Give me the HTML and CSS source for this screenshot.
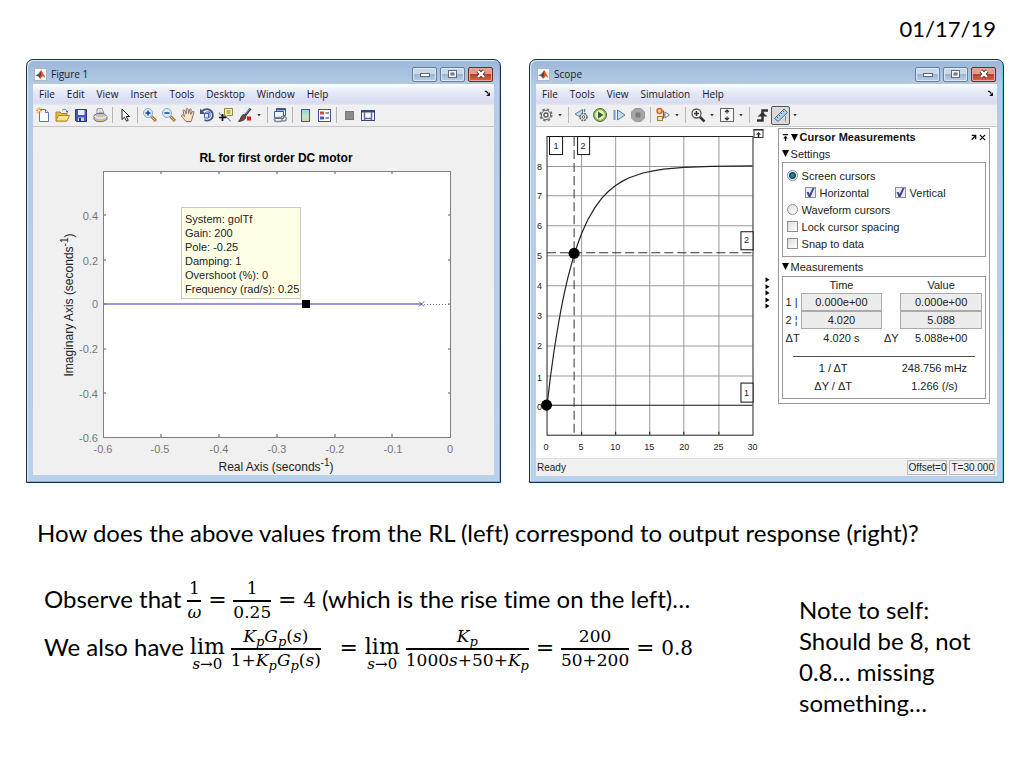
FILE: index.html
```html
<!DOCTYPE html>
<html lang="en">
<head>
<meta charset="utf-8">
<title>DC motor root locus and response</title>
<link rel="stylesheet" href="styles.css">
</head>
<body>
<svg class="defs" aria-hidden="true">
  <defs>
    <linearGradient id="sky" x1="0" y1="0" x2="0" y2="1"><stop offset="0" stop-color="#9ccdf0"/><stop offset=".5" stop-color="#b5e8c8"/><stop offset="1" stop-color="#f3c99a"/></linearGradient>
    <symbol id="matlab" viewBox="0 0 14 14"><rect x=".5" y=".5" width="13" height="13" fill="#f7f7f7" stroke="#a9b5c4"/><path d="M1.5 8 5 6l2.500-3.500L6 10 4 9z" fill="#3d6fb0"/><path d="M5 8 8 2.300 12.500 10.500 9.500 9 6.500 11.500z" fill="#d95a24"/><path d="M8 2.300 6.500 11.500 5 8z" fill="#7c2a1c"/></symbol>
    <symbol id="dock" viewBox="0 0 8 8"><path d="M1 1.500h1.500L5 4" fill="none" stroke="#111" stroke-width="1.500"/><path d="M6.800 2.500v4.300H2.500z" fill="#111"/></symbol>
  </defs>
</svg>
<main class="slide">
  <p class="date">01/17/19</p>
  <div class="windows">
    <section class="window" aria-label="Figure 1">
      <header class="titlebar">
        <svg class="logo"><use href="#matlab"/></svg>
        <h2 class="title">Figure 1</h2>
        <button class="caption" aria-label="Minimize"><svg viewBox="0 0 12 10"><rect x="1.500" y="4.500" width="9" height="3" fill="#fff" stroke="#59687a"/></svg></button>
        <button class="caption" aria-label="Maximize"><svg viewBox="0 0 12 10"><rect x="1.500" y="1.500" width="8" height="7" fill="#fff" stroke="#59687a"/><rect x="4" y="4" width="3" height="2" fill="#7fa0c4" stroke="#59687a"/></svg></button>
        <button class="caption close" aria-label="Close"><svg viewBox="0 0 12 10"><path d="M3 2l6 6M9 2 3 8" stroke="#6a2a22" stroke-width="4"/><path d="M3 2l6 6M9 2 3 8" stroke="#fff" stroke-width="2.400"/></svg></button>
      </header>
      <nav class="menubar">
        <button>File</button><button>Edit</button><button>View</button><button>Insert</button><button>Tools</button><button>Desktop</button><button>Window</button><button>Help</button>
        <svg class="dock"><use href="#dock"/></svg>
      </nav>
      <div class="toolbar">
        <button class="tool" aria-label="New"><svg viewBox="0 0 16 16"><path d="M4.500 2.500h6l3 3v9h-9z" fill="#fbfcff" stroke="#5b76b8"/><path d="M10.500 2.500v3h3" fill="#dce6f7" stroke="#5b76b8"/><path d="M1 3.500h6M4 .5v6M2 1.500l4 4M6 1.500l-4 4" stroke="#e8793a"/><circle cx="4" cy="3.500" r="1.200" fill="#fff2c0"/></svg></button>
        <button class="tool" aria-label="Open"><svg viewBox="0 0 16 16"><path d="M2 14V5h4l1.500 1.500H13V14z" fill="#e8b84a" stroke="#a9812a"/><path d="M2 14 4.500 8.500H15.500L13 14z" fill="#ffe58b" stroke="#b38a2c"/><path d="M8 3.500c2-2 4-1.500 5 1" fill="none" stroke="#3f6fb5"/><path d="M14.500 3.500 13.500 6 11.500 4.500z" fill="#3f6fb5"/></svg></button>
        <button class="tool" aria-label="Save"><svg viewBox="0 0 16 16"><path d="M2.500 2.500h11v12h-10l-1-1z" fill="#4759bb" stroke="#29367c"/><path d="M5 3h6.500v5H5z" fill="#e8eefc"/><path d="M5 10.500h6V14H5z" fill="#c7d0e8"/><path d="M6 11h2v3H6z" fill="#2c3a82"/></svg></button>
        <button class="tool" aria-label="Print"><svg viewBox="0 0 16 16"><path d="M5 7V2l5-.5L12 7z" fill="#fff" stroke="#888"/><path d="M6.500 4h3M6.500 5.500h4" stroke="#aaa"/><path d="M2 8.500 5 6.500h7l3 3v3l-4 2H5l-3-2z" fill="#c2c2c4" stroke="#747476"/><path d="M2.500 9.500 6 11h5l3.500-1.500" fill="none" stroke="#fff"/><path d="M6 13h5" stroke="#e6c93c" stroke-width="1.500"/></svg></button>
        <span class="sep"></span>
        <button class="tool" aria-label="Edit plot"><svg viewBox="0 0 16 16"><path d="M5 2v10.500l2.500-2.300 2 4 1.700-.9-2-3.800H12.500z" fill="#fff" stroke="#222"/></svg></button>
        <span class="sep"></span>
        <button class="tool" aria-label="Zoom in"><svg viewBox="0 0 16 16"><path d="M9.500 9.500 14 14" stroke="#a47438" stroke-width="3"/><path d="m9.500 9.500 4 4" stroke="#edc07a"/><circle cx="6" cy="6" r="4.500" fill="#d5edf9" stroke="#83abc9"/><path d="M3.500 6h5M6 3.500v5" stroke="#173f91" stroke-width="1.500"/></svg></button>
        <button class="tool" aria-label="Zoom out"><svg viewBox="0 0 16 16"><path d="M9.500 9.500 14 14" stroke="#a47438" stroke-width="3"/><path d="m9.500 9.500 4 4" stroke="#edc07a"/><circle cx="6" cy="6" r="4.500" fill="#d5edf9" stroke="#83abc9"/><path d="M3.500 6h5" stroke="#173f91" stroke-width="1.500"/></svg></button>
        <button class="tool" aria-label="Pan"><svg viewBox="0 0 16 16"><path d="M6 14.500C4 12 2.500 10.500 1.500 9c0-1.500 1.500-1.300 3 .5L3 4c0-1.500 1.500-1.500 2 0l1.300 3L6.200 2.500c.2-1.500 1.700-1.400 1.900 0l.4 4.200 1-4c.4-1.300 1.900-1 1.700.3l-.6 4.500 1.800-2.800c.8-1 2-.3 1.500.8-1 3-1.500 5.500-2.900 9z" fill="#fde3c8" stroke="#806a68"/></svg></button>
        <button class="tool" aria-label="Rotate 3D"><svg viewBox="0 0 16 16"><path d="M2 5.500C5 1 11 1 13.300 5.500 15.500 11 10.500 15 5.500 13" fill="none" stroke="#43557c" stroke-width="1.800"/><path d="M1 1.500v5.500h5.500z" fill="#43557c"/><path d="m5.500 6.500 2-1.500H11v4.500L9.500 11h-4zM5.500 6.500h4V11M9.500 6.500 11 5" fill="#dfe8fb" stroke="#4360ab"/></svg></button>
        <button class="tool" aria-label="Data cursor"><svg viewBox="0 0 16 16"><path d="M6.500 1.500h8v7h-5l-2 2.500v-2.500h-1z" fill="#f5f1a0" stroke="#8a8a3c"/><path d="M8.500 4h4M8.500 6h4" stroke="#82823d"/><path d="M1.500 5.500c0 5 7.500 2 11 9" fill="none" stroke="#4b54c0"/><path d="M4.500 7v7M1 10.500h7" stroke="#111" stroke-width="1.700"/></svg></button>
        <button class="tool" aria-label="Brush"><svg viewBox="0 0 16 16"><path d="M13.500 1.500 8 8.500" stroke="#33415e" stroke-width="2.400"/><path d="M13 1.500 8.500 7" stroke="#9fb2d4" stroke-width=".8"/><path d="M6.500 7.500 9 9.500C8.500 13 5 14 1.500 14.500 4 12.500 3.500 8.500 6.500 7.500z" fill="#704943" stroke="#3b3038"/><rect x="10" y="9.500" width="4" height="4" fill="#d91c1c"/></svg></button>
        <span class="caret"></span>
        <span class="sep"></span>
        <button class="tool" aria-label="Link plot"><svg viewBox="0 0 16 16"><path d="M4.500 1.500h9v7h-9z" fill="#fff" stroke="#3c588c"/><path d="M4.500 2.500h9" stroke="#3c588c" stroke-width="2"/><path d="M2.500 4.500h9v7h-9z" fill="#eef4fe" stroke="#3c588c"/><path d="M4 10.500h4a2 2 0 0 1 0 4H5a2 2 0 0 1-1-4zM9 9.500h3.500a2.300 2.300 0 0 1 0 4.500H9" fill="none" stroke="#7d8b9d" stroke-width="1.500"/></svg></button>
        <span class="sep"></span>
        <button class="tool" aria-label="Insert colorbar"><svg viewBox="0 0 16 16"><rect x="4.500" y="2.500" width="8" height="12" fill="url(#sky)" stroke="#44588a"/></svg></button>
        <button class="tool" aria-label="Insert legend"><svg viewBox="0 0 16 16"><rect x="2.500" y="2.500" width="12" height="12" fill="#fff" stroke="#45528c"/><path d="M4 4.500h4v3H4z" fill="#d94343"/><path d="M4 9.500h4v3H4z" fill="#4659cf"/><path d="M9.500 6H13M9.500 11H13" stroke="#222"/></svg></button>
        <span class="sep"></span>
        <button class="tool" aria-label="Hide plot tools"><svg viewBox="0 0 16 16"><rect x="4.500" y="4.500" width="8" height="8" fill="#8b8b8b" stroke="#777"/></svg></button>
        <button class="tool" aria-label="Show plot tools"><svg viewBox="0 0 16 16"><rect x="1.500" y="3.500" width="13" height="10" fill="#fff" stroke="#35477e"/><path d="M1.500 4.500h13" stroke="#35477e" stroke-width="2"/><path d="M4.500 5v8M11.500 5v8M4.500 11.500h7" stroke="#5c6c9c" stroke-width="1.500"/></svg></button>
      </div>
      <svg class="figure" viewBox="33 127 461 348" role="img" aria-label="Root locus plot">
        <rect x="103" y="171" width="348" height="266" fill="#fff"/>
        <path d="M161 171v3M219 171v3M277 171v3M335 171v3M392 171v3M161 437v-3M219 437v-3M277 437v-3M335 437v-3M392 437v-3M103 215h3M103 260h3M103 304h3M103 349h3M103 393h3M451 215h-3M451 260h-3M451 304h-3M451 349h-3M451 393h-3" stroke="#555"/>
        <rect x="103.500" y="171.500" width="347" height="266" fill="none" stroke="#808080"/>
        <path d="M421 304.500h30" stroke="#777" stroke-dasharray="1 2"/>
        <path d="M104 304h318" stroke="#7a72c8" stroke-width="1.500"/>
        <path d="m419 301.500 5 5m0-5-5 5" stroke="#3f6fd0"/>
        <text class="plot-title" x="276" y="162">RL for first order DC motor</text>
        <g class="ticks end"><text x="98" y="220">0.4</text><text x="98" y="265">0.2</text><text x="98" y="308">0</text><text x="98" y="353">-0.2</text><text x="98" y="398">-0.4</text><text x="98" y="442">-0.6</text></g>
        <g class="ticks"><text x="103" y="453">-0.6</text><text x="160" y="453">-0.5</text><text x="219" y="453">-0.4</text><text x="277" y="453">-0.3</text><text x="335" y="453">-0.2</text><text x="393" y="453">-0.1</text><text x="450" y="453">0</text></g>
        <text class="axis" x="276" y="471">Real Axis (seconds<tspan class="sup" dy="-5">-1</tspan><tspan dy="5">)</tspan></text>
        <text class="axis" transform="translate(73 305) rotate(-90)">Imaginary Axis (seconds<tspan class="sup" dy="-5">-1</tspan><tspan dy="5">)</tspan></text>
        <rect x="181.500" y="207.500" width="119" height="91" fill="#ffffe6" stroke="#c9c9bd"/>
        <g class="tip"><text x="185" y="223">System: golTf</text><text x="185" y="237">Gain: 200</text><text x="185" y="251">Pole: -0.25</text><text x="185" y="265">Damping: 1</text><text x="185" y="279">Overshoot (%): 0</text><text x="185" y="293">Frequency (rad/s): 0.25</text></g>
        <rect x="302" y="300" width="8" height="8" fill="#000"/>
      </svg>
    </section>

    <section class="window" aria-label="Scope">
      <header class="titlebar">
        <svg class="logo"><use href="#matlab"/></svg>
        <h2 class="title">Scope</h2>
        <button class="caption" aria-label="Minimize"><svg viewBox="0 0 12 10"><rect x="1.500" y="4.500" width="9" height="3" fill="#fff" stroke="#59687a"/></svg></button>
        <button class="caption" aria-label="Maximize"><svg viewBox="0 0 12 10"><rect x="1.500" y="1.500" width="8" height="7" fill="#fff" stroke="#59687a"/><rect x="4" y="4" width="3" height="2" fill="#7fa0c4" stroke="#59687a"/></svg></button>
        <button class="caption close" aria-label="Close"><svg viewBox="0 0 12 10"><path d="M3 2l6 6M9 2 3 8" stroke="#6a2a22" stroke-width="4"/><path d="M3 2l6 6M9 2 3 8" stroke="#fff" stroke-width="2.400"/></svg></button>
      </header>
      <nav class="menubar">
        <button>File</button><button>Tools</button><button>View</button><button>Simulation</button><button>Help</button>
        <svg class="dock"><use href="#dock"/></svg>
      </nav>
      <div class="toolbar">
        <button class="tool" aria-label="Configuration"><svg viewBox="0 0 16 16"><circle cx="8" cy="8" r="5.700" fill="none" stroke="#777" stroke-width="1.800" stroke-dasharray="2.500 1.980"/><circle cx="8" cy="8" r="4.700" fill="#eee" stroke="#666"/><circle cx="8" cy="8" r="2" fill="#fff" stroke="#555" stroke-width="1.300"/></svg></button>
        <span class="caret"></span>
        <span class="sep"></span>
        <button class="tool" aria-label="Step back"><svg viewBox="0 0 16 16"><path d="M9.500 2.500v9L2 7z" fill="#c5dced" stroke="#68869f"/><path d="M11.500 2v3" stroke="#68869f" stroke-width="1.500"/><circle cx="10.500" cy="10" r="3.500" fill="#eee" stroke="#596571" stroke-width="1.500" stroke-dasharray="2 .75"/><circle cx="10.500" cy="10" r="1.300" fill="#fff" stroke="#555"/></svg></button>
        <button class="tool" aria-label="Run"><svg viewBox="0 0 16 16"><circle cx="8" cy="8" r="6.500" fill="#91bd49" stroke="#55733a"/><circle cx="8" cy="8" r="4.700" fill="#e9f5cf"/><path d="m6 4.500 5.500 3.500L6 11.500z" fill="#236b29"/></svg></button>
        <button class="tool" aria-label="Step forward"><svg viewBox="0 0 16 16"><path d="M3.500 3v10" stroke="#6d9dc6" stroke-width="2"/><path d="m6.500 3 7.500 5-7.500 5z" fill="#c3e1f7" stroke="#4e7ca4"/></svg></button>
        <button class="tool" aria-label="Stop"><svg viewBox="0 0 16 16"><path d="M5 1.500h6L14.500 5v6L11 14.500H5L1.500 11V5z" fill="#a6a6a6" stroke="#999"/><path d="M5.500 5.500h5v5h-5z" fill="#7c7c7c"/></svg></button>
        <span class="sep"></span>
        <button class="tool" aria-label="Highlight block"><svg viewBox="0 0 16 16"><path d="M5 4h3.500v7H4M8.500 8H12" fill="none" stroke="#7a5b4a" stroke-width="1.200"/><circle cx="4.500" cy="4" r="2.500" fill="#ffc58f" stroke="#d96a26" stroke-width="1.500"/><rect x="2.500" y="9.500" width="5" height="4" fill="#ffe6a0" stroke="#a67939"/><path d="m10 5 4.500 3-4.500 3z" fill="#fff" stroke="#777"/></svg></button>
        <span class="caret"></span>
        <span class="sep"></span>
        <button class="tool" aria-label="Zoom"><svg viewBox="0 0 16 16"><circle cx="6.500" cy="6.500" r="4.500" fill="#fafafa" stroke="#555" stroke-width="1.300"/><path d="M4 6.500h5M6.500 4v5" stroke="#333" stroke-width="1.400"/><path d="m10 10 4.500 4.500" stroke="#333" stroke-width="2.500"/></svg></button>
        <span class="caret"></span>
        <button class="tool" aria-label="Scale axes"><svg viewBox="0 0 16 16"><rect x="1.500" y="1.500" width="13" height="13" fill="#f8f8f8" stroke="#666"/><path d="M8 3v3.500M8 9.500V13M6 5l2-2 2 2M6 11l2 2 2-2" fill="none" stroke="#333" stroke-width="1.200"/></svg></button>
        <span class="caret"></span>
        <span class="sep"></span>
        <button class="tool" aria-label="Triggers"><svg viewBox="0 0 16 16"><path d="M3 13.500h5.500v-10H14" fill="none" stroke="#333" stroke-width="2.500"/><path d="M3.500 9.500h10L8.500 5z" fill="#333"/></svg></button>
        <button class="tool pressed" aria-label="Cursor measurements" aria-pressed="true"><svg viewBox="0 0 16 16"><path d="M1.500 11.500 11 2l3.500 3.500L5 14.500z" fill="#a9d2e8" stroke="#52718a"/><path d="m3.500 9.500 1.500 1.500M5.500 7.500 7 9M7.500 5.500 9 7M9.500 3.500 11 5" stroke="#426278"/><path d="M12.500 9v5.500" stroke="#8a8a8a"/></svg></button>
        <span class="caret"></span>
      </div>
      <div class="scope">
        <svg class="trace" viewBox="536 127 240 330" role="img" aria-label="Scope response">
          <path d="M581.500 136v298M615.500 136v298M649.500 136v298M683.500 136v298M718.500 136v298M547 166.500h205M547 195.500h205M547 225.500h205M547 255.500h205M547 285.500h205M547 315.500h205M547 345.500h205M547 375.500h205" stroke="#999"/>
          <rect x="547" y="136.500" width="205.500" height="298" fill="none" stroke="#222"/>
          <path d="M547 404.500h205" stroke="#111"/>
          <path d="M581.500 434v-3M615.500 434v-3M649.500 434v-3M683.500 434v-3M718.500 434v-3" stroke="#111"/>
          <path d="M574 137v298" stroke="#333" stroke-dasharray="9 4"/>
          <path d="M547 252.500h205" stroke="#333" stroke-dasharray="9 4"/>
          <polyline points="547,404.500 550.400,376.400 553.800,351.700 557.300,329.800 560.700,310.500 564.100,293.500 567.500,278.500 571,265.300 574.300,253.600 577.800,243.200 581.200,234.100 584.700,226.100 588,219 594.900,207.200 601.700,198 608.600,190.900 615.400,185.300 622.300,181 629,177.600 642.800,172.900 653,170.700 663.300,169.100 683.800,167.300 711,166.300 752,165.800" fill="none" stroke="#222" stroke-width="1.200"/>
          <g fill="#fff" stroke="#111"><rect x="549.500" y="136.500" width="13" height="18"/><rect x="577.500" y="136.500" width="12" height="18"/><rect x="740.500" y="231.500" width="12" height="18"/><rect x="740.500" y="382.500" width="12" height="19"/></g>
          <g class="small"><text x="556" y="149">1</text><text x="583" y="149">2</text><text x="746" y="243">2</text><text x="746" y="395">1</text></g>
          <g class="small end"><text x="542" y="170">8</text><text x="542" y="199">7</text><text x="542" y="229">6</text><text x="542" y="259">5</text><text x="542" y="289">4</text><text x="542" y="319">3</text><text x="542" y="349">2</text><text x="542" y="380">1</text><text x="542" y="409">0</text></g>
          <g class="small"><text x="546" y="449">0</text><text x="581" y="449">5</text><text x="615" y="449">10</text><text x="649" y="449">15</text><text x="684" y="449">20</text><text x="718" y="449">25</text><text x="752" y="449">30</text></g>
          <circle cx="574" cy="253" r="5.500"/><circle cx="546.500" cy="404.500" r="5.500"/>
          <rect x="753.500" y="129.500" width="9" height="8" fill="#fff" stroke="#333"/><path d="M753 130h10" stroke="#222"/><path d="M758 137v-3" stroke="#222" stroke-width="1.500"/><path d="M755.500 134.500 758 132l2.500 2.500z" fill="#222"/>
          <path d="M765 277v5l4-2.500zM765 284v5l4-2.500zM765 290v5l4-2.500zM765 297v5l4-2.500zM765 303v5l4-2.500z"/>
        </svg>
        <aside class="panel">
          <h3 class="panel-title">
            <svg class="glyph" viewBox="0 0 8 8"><path d="M1 .8h6M4 8V3" stroke="#111" stroke-width="1.500"/><path d="M1.500 5 4 2l2.500 3z"/></svg>
            <svg class="glyph" viewBox="0 0 8 8"><path d="M0 0h8L4 8z"/></svg>
            <span class="grow">Cursor Measurements</span>
            <svg class="glyph" viewBox="0 0 8 8"><path d="M2 1.500h4.500V6M6.500 1.500 2 6.500" fill="none" stroke="#111" stroke-width="1.500"/></svg>
            <svg class="glyph" viewBox="0 0 8 8"><path d="m1 1 6 6M7 1 1 7" stroke="#111" stroke-width="1.500"/></svg>
          </h3>
          <h4 class="group"><svg class="glyph" viewBox="0 0 8 8"><path d="M0 0h8L4 8z"/></svg>Settings</h4>
          <div class="box settings">
            <label><input type="radio" name="mode" checked>Screen cursors</label>
            <div class="pair"><label><input type="checkbox" checked>Horizontal</label><label><input type="checkbox" checked>Vertical</label></div>
            <label><input type="radio" name="mode">Waveform cursors</label>
            <label><input type="checkbox">Lock cursor spacing</label>
            <label><input type="checkbox">Snap to data</label>
          </div>
          <h4 class="group"><svg class="glyph" viewBox="0 0 8 8"><path d="M0 0h8L4 8z"/></svg>Measurements</h4>
          <div class="box readings">
            <table class="values">
              <colgroup><col class="key"><col><col class="mid"><col></colgroup>
              <tr><td></td><th>Time</th><td></td><th>Value</th></tr>
              <tr><td>1 |</td><td class="cell"><input aria-label="Time 1" value="0.000e+00"></td><td></td><td class="cell"><input aria-label="Value 1" value="0.000e+00"></td></tr>
              <tr><td>2 ¦</td><td class="cell"><input aria-label="Time 2" value="4.020"></td><td></td><td class="cell"><input aria-label="Value 2" value="5.088"></td></tr>
              <tr><td>ΔT</td><td>4.020 s</td><td class="delta">ΔY</td><td>5.088e+00</td></tr>
            </table>
            <hr>
            <table class="rates">
              <tr><td>1 / ΔT</td><td>248.756 mHz</td></tr>
              <tr><td>ΔY / ΔT</td><td>1.266 (/s)</td></tr>
            </table>
          </div>
        </aside>
      </div>
      <footer class="status"><span class="grow">Ready</span><span class="field">Offset=0</span><span class="field">T=30.000</span></footer>
    </section>
  </div>

  <p class="question">How does the above values from the RL (left) correspond to output response (right)?</p>
  <div class="notes">
    <div class="work">
      <div class="line">
        <span>Observe that</span>
        <span class="frac"><span>1</span><span><i>ω</i></span></span><span class="eq">=</span>
        <span class="frac"><span>1</span><span>0.25</span></span><span class="eq">=</span>
        <span class="num">4</span><span>(which is the rise time on the left)…</span>
      </div>
      <div class="line">
        <span>We also have</span>
        <span class="lim"><span>lim</span><span class="under"><i>s</i>→0</span></span>
        <span class="frac"><span><i>K<sub>p</sub>G<sub>p</sub></i>(<i>s</i>)</span><span>1+<i>K<sub>p</sub>G<sub>p</sub></i>(<i>s</i>)</span></span>
        <span class="eq spaced">=</span>
        <span class="lim"><span>lim</span><span class="under"><i>s</i>→0</span></span>
        <span class="frac"><span><i>K<sub>p</sub></i></span><span>1000<i>s</i>+50+<i>K<sub>p</sub></i></span></span><span class="eq">=</span>
        <span class="frac"><span>200</span><span>50+200</span></span><span class="eq">=</span>
        <span class="num">0.8</span>
      </div>
    </div>
    <p class="memo">Note to self:<br>Should be 8, not 0.8… missing something…</p>
  </div>
</main>
</body>
</html>
```
FILE: styles.css
```css
* { box-sizing: border-box; }
body { margin: 0; background: #fff; color: #000; font-family: Lato, sans-serif; font-size: 24px; font-variant-ligatures: none; }
p, h2, h3, h4 { margin: 0; font-weight: normal; }
button { border: 0; padding: 0; background: none; font: inherit; color: inherit; }
.defs { position: absolute; width: 0; height: 0; }
.slide { padding: 13px 20px 20px 26px; }
.date { padding-right: 8px; text-align: right; font-size: 22px; line-height: 32px; }
.windows { display: grid; grid-template-columns: 1fr 1fr; gap: 28px; margin-top: 14px; }
.grow { flex: 1; }

.window { display: flex; flex-direction: column; min-width: 0; padding: 0 6px 6px; border: 1px solid #17313f; border-radius: 7px 7px 0 0; background: linear-gradient(#9bb7d8 0, #b4cbe5 25px, #b9d1ea); box-shadow: inset -1px -1px 0 #62c6e6, inset 1px 1px 0 #dcecf8; font-family: "Liberation Sans", sans-serif; font-size: 11px; }
.titlebar { display: flex; align-items: center; gap: 3px; height: 24px; padding: 4px 1px 0 1px; }
.logo { width: 13px; height: 13px; }
.title { flex: 1; padding-left: 1px; font-family: "Open Sans", sans-serif; font-size: 10px; color: #15212f; }
.caption { display: grid; place-items: center; width: 25px; height: 15px; border: 1px solid #65809f; border-radius: 2px; background: linear-gradient(#c9d9ea 45%, #9db7d2 50%, #b9d0e6); box-shadow: inset 0 0 0 1px #dbe7f3; }
.caption svg { width: 12px; height: 10px; }
.close { border-color: #6a2a2c; background: linear-gradient(#df9c90 45%, #bd3d26 50%, #d2694c); box-shadow: inset 0 0 0 1px #e6aaa0; }
.menubar { display: flex; align-items: center; gap: 12px; height: 21px; padding: 0 3px 2px 6px; background: linear-gradient(#fcfdff, #e4e7f7 45%, #d8dcf1 90%, #e8e9f2); font-family: "Open Sans", sans-serif; font-size: 10px; color: #15151f; }
.dock { width: 7px; height: 7px; margin-left: auto; }
.toolbar { display: flex; align-items: center; height: 22px; padding-bottom: 1px; background: #f0f0f0; border-bottom: 1px solid #c6c6c6; }
.tool { display: grid; place-items: center; width: 19px; height: 19px; }
.tool svg { width: 16px; height: 16px; }
.pressed { border: 1px solid #555; border-radius: 2px; background: #dadada; }
.sep { width: 1px; height: 16px; margin: 0 2px 0 3px; background: #b5b5b5; }
.caret { width: 10px; height: 3px; background: #333; clip-path: polygon(3px 0, 7px 0, 5px 3px); }

.figure { display: block; width: 100%; background: #f0f0f0; }
.figure text, .trace text { text-anchor: middle; font-family: "Liberation Sans", sans-serif; font-size: 11px; }
.figure .plot-title { font-size: 12px; font-weight: bold; }
.figure .ticks text { fill: #777; }
.figure .end text, .trace .end text { text-anchor: end; }
.figure .axis { font-size: 12px; fill: #222; }
.figure .sup { font-size: 10px; }
.figure .tip text { text-anchor: start; fill: #222; }
.trace .small text { font-size: 9px; fill: #222; }

.scope { display: flex; flex: 1; align-items: flex-start; background: #fff; }
.trace { flex: 240; min-width: 0; }
.panel { flex: 204; min-width: 0; margin: 1px 7px 0 1px; padding: 0 3px 4px 3px; border: 1px solid #999; color: #222; }
.panel-title { display: flex; align-items: center; gap: 2px; height: 16px; font-size: 11px; font-weight: bold; color: #111; }
.glyph { flex: none; width: 7px; height: 7px; }
.group { display: flex; align-items: center; gap: 2px; height: 17px; font-size: 11px; }
.box { border: 1px solid #999; }
.settings { padding: 4px; }
.settings label { display: flex; align-items: center; gap: 4px; height: 17px; }
.settings input { appearance: none; width: 11px; height: 11px; margin: 0; border: 1px solid #8d8f94; background: linear-gradient(135deg, #ddd, #fff); }
.settings input[type=radio] { border-radius: 50%; }
.settings input[type=radio]:checked { background: radial-gradient(circle, #2a86a8 0 1px, #174258 3px, #e6eef4 4px); }
.settings input[type=checkbox]:checked { display: grid; place-items: center; background: #e8ebf4; }
.settings input[type=checkbox]:checked::after { content: ""; width: 9px; height: 9px; background: #3d4899; clip-path: polygon(1px 4px, 3px 4px, 4px 6px, 7px 0, 9px 0, 5px 9px, 3px 9px); }
.pair { display: grid; grid-template-columns: 90px 1fr; padding-left: 18px; }
.box + .group { height: 19px; }
.readings { padding-bottom: 3px; }
table { width: 100%; border-collapse: collapse; table-layout: fixed; }
td, th { height: 18px; padding: 0; font-size: 11px; font-weight: normal; text-align: center; white-space: nowrap; }
.values tr:first-child > * { height: 16px; }
.values td:first-child { text-align: left; padding-left: 3px; }
.values { width: calc(100% - 3px); }
.key { width: 18px; }
.mid { width: 18px; }
.values .delta { direction: rtl; }
.cell input { display: block; width: 100%; height: 18px; padding: 0; border: 1px solid #aaa; background: #ececec; color: #222; font: 11px "Liberation Sans", sans-serif; text-align: center; }
.box hr { height: 1px; margin: 9px 10px 2px; border: 0; background: #555; }
.status { display: flex; align-items: center; height: 18px; padding: 0 2px 0 1px; background: #f0f0f0; border-top: 1px solid #ddd; font-size: 10px; color: #222; }
.field { margin-left: 2px; padding: 1px 0 1px 1px; border: 1px solid #bbb; }

.question { margin: 34px 0 0 11px; line-height: 31px; }
.notes { display: flex; justify-content: space-between; margin-top: 28px; }
.work { padding-left: 18px; }
.line { display: flex; align-items: center; gap: 6px; min-height: 46px; white-space: nowrap; }
.frac { display: inline-flex; flex-direction: column; font: 17px "DejaVu Serif", serif; text-align: center; }
.frac > span { line-height: 20px; }
.frac > span:first-child { line-height: 24px; border-bottom: 2px solid #000; }
.frac sub { font-size: 13px; line-height: 0; vertical-align: -4px; }
.eq { width: 20px; padding-top: 3px; font: 22px/24px "DejaVu Serif", serif; text-align: center; }
.spaced { margin-left: 12px; }
.num { padding-top: 3px; font: 20px/24px "DejaVu Serif", serif; }
.lim { display: inline-flex; flex-direction: column; padding-top: 16px; font: 22px/18px "DejaVu Serif", serif; text-align: center; }
.under { font-size: 15px; line-height: 16px; }
.memo { width: 205px; margin-top: 18px; line-height: 31px; }
```
